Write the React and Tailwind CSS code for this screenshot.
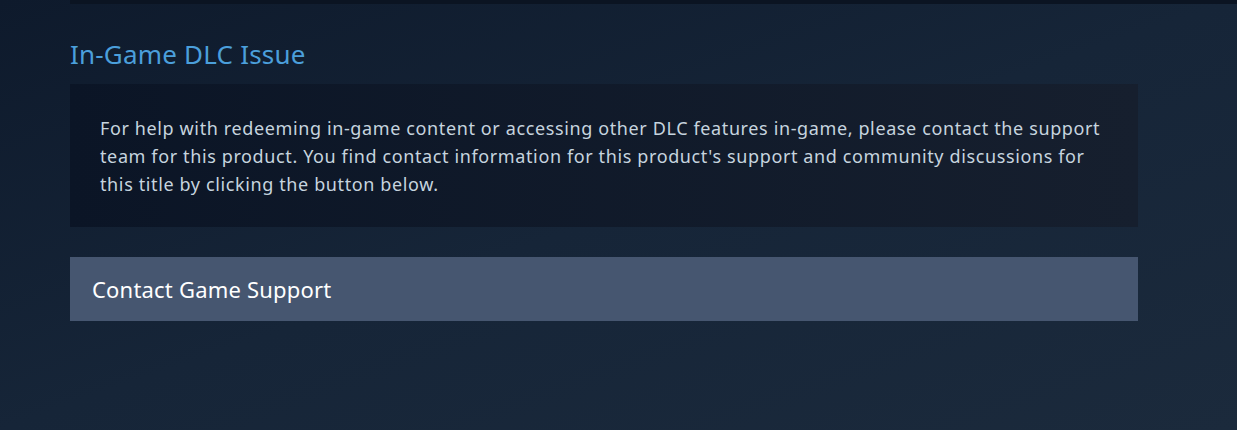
export default function App() {
  return (
    <div
      className="w-[1237px] h-[430px] overflow-hidden bg-gradient-to-br from-[#0e1a2c] via-[#162538] to-[#1b2a3c]"
      style={{ fontFamily: '"Noto Sans", "Open Sans", sans-serif' }}
    >
      <div className="ml-[70px] h-[4px] bg-[#0b1422]" />
      <div className="pl-[70px] w-[1138px]">
        <h2 className="mt-[34px] text-[26px] leading-[32px] tracking-[0.2px] text-[#4b9fdb] font-normal">
          In-Game DLC Issue
        </h2>
        <div className="mt-[14px] bg-gradient-to-r from-[#0b1526] to-[#161f2e] px-[30px] pt-[30px] pb-[29px]">
          <p className="text-[18px] leading-[28px] tracking-[0.62px] text-[#c6d4df]">
            For help with redeeming in-game content or accessing other DLC features in-game, please contact the support
            team for this product. You find contact information for this product's support and community discussions for
            this title by clicking the button below.
          </p>
        </div>
        <button className="mt-[30px] w-full h-[64px] bg-[#465670] text-left pl-[22px] text-[22px] tracking-[0.2px] text-white">
          Contact Game Support
        </button>
      </div>
    </div>
  );
}
